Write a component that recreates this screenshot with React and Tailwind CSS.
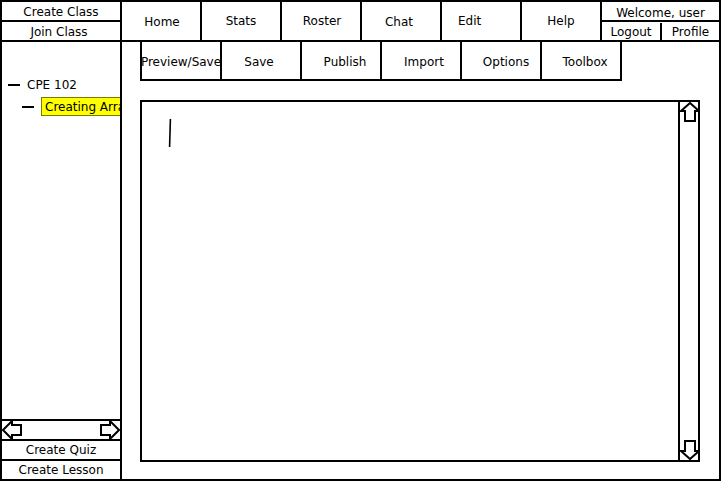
import React from 'react';

const font = { fontFamily: '"DejaVu Sans", sans-serif' };

const navItems = [
  { label: 'Home', cls: 'justify-center pl-[2px] pt-[2px]' },
  { label: 'Stats', cls: 'justify-center' },
  { label: 'Roster', cls: 'justify-center pl-[2px]' },
  { label: 'Chat', cls: 'justify-center pr-[4px] pt-[2px]' },
  { label: 'Edit', cls: 'justify-start pl-[16px]' },
  { label: 'Help', cls: 'justify-center' },
];

const toolItems = [
  { label: 'Preview/Save', cls: 'justify-center' },
  { label: 'Save', cls: 'justify-center pr-[4px]' },
  { label: 'Publish', cls: 'justify-center pl-[8px]' },
  { label: 'Import', cls: 'justify-center pl-[6px]' },
  { label: 'Options', cls: 'justify-center pl-[10px]' },
  { label: 'Toolbox', cls: 'justify-center pl-[8px]' },
];

// outlined block arrows for the fake scrollbars
const Arrow = ({ dir }) => {
  const pts = {
    left: '1,10 10,1 10,5 19,5 19,15 10,15 10,19',
    right: '19,10 10,1 10,5 1,5 1,15 10,15 10,19',
    up: '10,1 19,9 15,9 15,19 5,19 5,9 1,9',
    down: '10,19 19,11 15,11 15,1 5,1 5,11 1,11',
  }[dir];
  return (
    <svg width="20" height="20" viewBox="0 0 20 20" className="block shrink-0">
      <polygon points={pts} fill="white" stroke="black" strokeWidth="2" strokeLinejoin="miter" />
    </svg>
  );
};

export default function App() {
  return (
    <div className="w-[722px] h-[482px] bg-white">
      <div
        className="w-[721px] h-[481px] border-2 border-black bg-white text-black text-[12px] flex overflow-hidden"
        style={font}
      >
        {/* Left column */}
        <aside className="w-[120px] shrink-0 border-r-2 border-black flex flex-col">
          <div className="h-[20px] border-b-2 border-black flex items-center justify-center pt-[2px]">Create Class</div>
          <div className="h-[20px] border-b-2 border-black flex items-center justify-center pr-[4px] pt-[2px]">Join Class</div>

          {/* Tree */}
          <div className="flex-1 overflow-hidden pt-[34px] flex flex-col gap-[3px]">
            <div className="h-[18px] flex items-center pl-[6px] gap-[7px]">
              <span className="w-[12px] h-[2px] bg-black" />
              <span className="whitespace-nowrap">CPE 102</span>
            </div>
            <div className="h-[19px] flex items-center pl-[20px] gap-[7px]">
              <span className="w-[12px] h-[2px] bg-black shrink-0" />
              <span className="h-[19px] flex items-center pl-[3px] bg-[#ffff00] border border-[#7a7a00] whitespace-nowrap">
                Creating Arrays
              </span>
            </div>
          </div>

          {/* Horizontal scrollbar */}
          <div className="h-[22px] border-y-2 border-black flex items-center justify-between">
            <Arrow dir="left" />
            <Arrow dir="right" />
          </div>
          <div className="h-[20px] border-b-2 border-black flex items-center justify-center">Create Quiz</div>
          <div className="h-[18px] flex items-center justify-center">Create Lesson</div>
        </aside>

        {/* Right area */}
        <main className="flex-1 flex flex-col">
          {/* Top nav */}
          <nav className="h-[40px] border-b-2 border-black flex">
            {navItems.map((n) => (
              <div key={n.label} className={`w-[80px] border-r-2 border-black flex items-center ${n.cls}`}>
                {n.label}
              </div>
            ))}
            <div className="flex-1 flex flex-col">
              <div className="h-[20px] border-b-2 border-black flex items-center justify-center pt-[4px]">Welcome, user</div>
              <div className="flex-1 flex pt-[1px]">
                <div className="w-[60px] border-r-2 border-black flex items-center justify-center">Logout</div>
                <div className="flex-1 flex items-center justify-center">Profile</div>
              </div>
            </div>
          </nav>

          {/* Editor toolbar */}
          <div className="ml-[18px] self-start h-[39px] border-l-2 border-b-2 border-black flex">
            {toolItems.map((t) => (
              <div key={t.label} className={`w-[80px] border-r-2 border-black flex items-center whitespace-nowrap pt-[2px] ${t.cls}`}>
                {t.label}
              </div>
            ))}
          </div>

          {/* Editor */}
          <div className="mt-[19px] mb-[17px] ml-[18px] mr-[19px] flex-1 border-2 border-black flex">
            <div className="flex-1 pl-[26px] pt-[16px]">
              <svg width="4" height="30" viewBox="0 0 4 30" className="block">
                <line x1="2.4" y1="1" x2="1.6" y2="29" stroke="black" strokeWidth="1.6" />
              </svg>
            </div>
            <div className="w-[20px] border-l-2 border-black flex flex-col justify-between">
              <Arrow dir="up" />
              <Arrow dir="down" />
            </div>
          </div>
        </main>
      </div>
    </div>
  );
}
